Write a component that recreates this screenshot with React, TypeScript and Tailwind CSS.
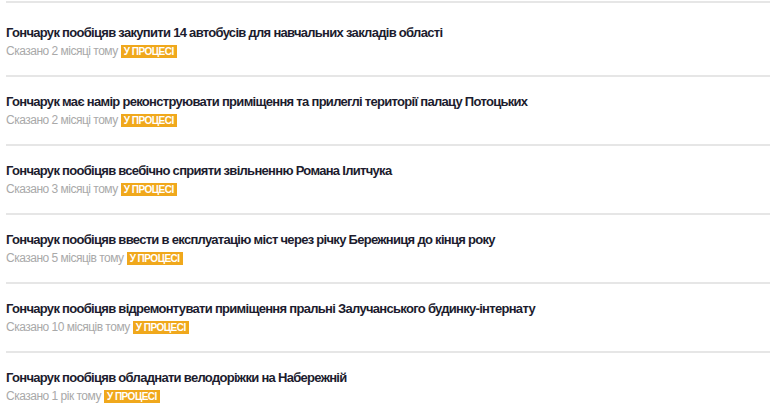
const promises = [
  { title: 'Гончарук пообіцяв закупити 14 автобусів для навчальних закладів області', said: 'Сказано 2 місяці тому' },
  { title: 'Гончарук має намір реконструювати приміщення та прилеглі території палацу Потоцьких', said: 'Сказано 2 місяці тому' },
  { title: 'Гончарук пообіцяв всебічно сприяти звільненню Романа Ілитчука', said: 'Сказано 3 місяці тому' },
  { title: 'Гончарук пообіцяв ввести в експлуатацію міст через річку Бережниця до кінця року', said: 'Сказано 5 місяців тому' },
  { title: 'Гончарук пообіцяв відремонтувати приміщення пральні Залучанського будинку-інтернату', said: 'Сказано 10 місяців тому' },
  { title: 'Гончарук пообіцяв обладнати велодоріжки на Набережній', said: 'Сказано 1 рік тому' },
];

export default function App() {
  return (
    <div className="w-[770px] h-[420px] overflow-hidden bg-white pl-[6px] pt-[1px] font-['Liberation_Sans_Narrow','Liberation_Sans',sans-serif]">
      {/* divider left over from the item above */}
      <div className="h-[2px] bg-[#e6e6e6] mb-[5px]" />
      {promises.map((p) => (
        <div key={p.title} className="border-b-2 border-[#e6e6e6] pt-[16px] pb-[15px]">
          <div className="text-[13px] leading-[18px] font-bold tracking-[-0.7px] text-[#1c1c2e]">{p.title}</div>
          <div className="flex items-center gap-[3px] text-[12px] leading-[18px] tracking-[-0.5px] text-[#a9a9a9]">
            <span>{p.said}</span>
            <span className="bg-[#f0a81c] px-[3px] text-[10px] leading-[13px] font-bold uppercase tracking-[-0.5px] text-white">
              у процесі
            </span>
          </div>
        </div>
      ))}
    </div>
  );
}
